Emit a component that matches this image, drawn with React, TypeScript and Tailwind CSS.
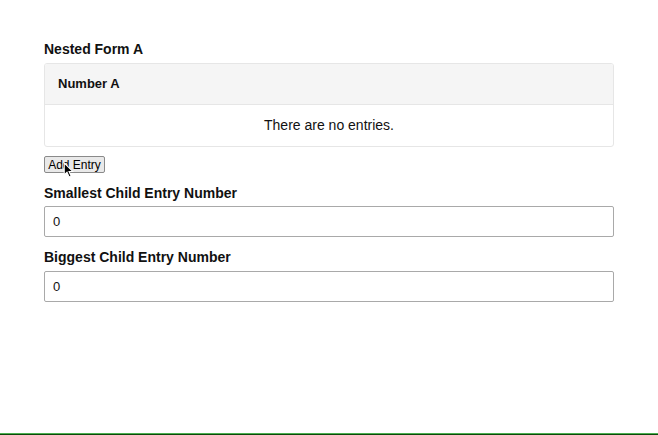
import { useState } from 'react';

export default function App() {
  const [smallest, setSmallest] = useState('0');
  const [biggest, setBiggest] = useState('0');

  return (
    <div
      className="h-[435px] w-full flex flex-col bg-white text-[#111]"
      style={{ fontFamily: '"Liberation Sans", Arial, sans-serif' }}
    >
      <main className="flex-1 px-[44px] pt-[40px]">
        {/* Nested form */}
        <h2 className="text-[14px] font-bold leading-[18px] mb-[5px]">Nested Form A</h2>
        <div className="w-[570px] border border-[#e6e6e6] rounded-[3px] overflow-hidden">
          <div className="h-[41px] bg-[#f5f5f5] border-b border-[#e6e6e6] flex items-center px-[13px]">
            <span className="text-[13px] font-bold">Number A</span>
          </div>
          <div className="h-[41px] flex items-center justify-center text-[14px]">
            There are no entries.
          </div>
        </div>

        <div className="relative mt-[9px] flex">
          <button className="h-[17px] w-[61px] text-[12px] leading-none border border-[#8a8a8a] rounded-[2px] bg-[#e9e9e9] text-black flex items-center justify-center">
            Add Entry
          </button>
          {/* mouse cursor */}
          <svg
            className="absolute left-[19px] top-[6px]"
            width="11"
            height="16"
            viewBox="0 0 10 15"
          >
            <path d="M1 1 L1 12 L3.6 9.6 L5.6 14 L7.4 13.2 L5.5 8.9 L9 8.9 Z" fill="#000" stroke="#fff" strokeWidth="1" />
          </svg>
        </div>

        {/* Fields */}
        <label className="block text-[14px] font-bold leading-[18px] mt-[11px] mb-[4px]">
          Smallest Child Entry Number
        </label>
        <input
          value={smallest}
          onChange={(e) => setSmallest(e.target.value)}
          className="block w-[570px] h-[31px] px-[8px] text-[13px] border border-[#a9a9a9] rounded-[2px] outline-none"
        />

        <label className="block text-[14px] font-bold leading-[18px] mt-[11px] mb-[5px]">
          Biggest Child Entry Number
        </label>
        <input
          value={biggest}
          onChange={(e) => setBiggest(e.target.value)}
          className="block w-[570px] h-[31px] px-[8px] text-[13px] border border-[#a9a9a9] rounded-[2px] outline-none"
        />
      </main>
      <div className="h-px bg-[#4caf50]" />
      <div className="h-px bg-[#0b4a0b]" />
    </div>
  );
}
